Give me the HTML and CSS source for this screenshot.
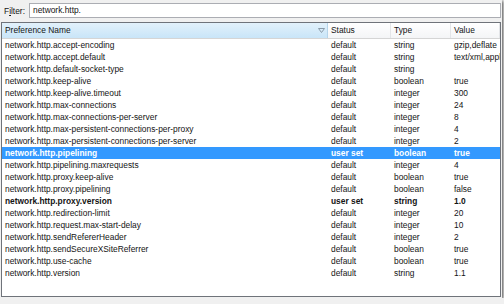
FILE: index.html
```html
<!DOCTYPE html>
<html lang="en">
<head>
  <meta charset="UTF-8" />
  <title>about:config</title>
  <link rel="stylesheet" href="styles.css">
</head>
<body>
  <div class="window">
    <div class="filter-row">
      <label class="filter-label">F<u>i</u>lter:</label>
      <div class="filter-input">network.http.</div>
    </div>

    <div class="prefs">
      <div class="row head">
        <div class="cell sorted">Preference Name
          <svg class="sort-icon" width="7" height="5" viewBox="0 0 7 5"><path d="M0.5 0.5 L6.5 0.5 L3.5 4.5 Z" fill="none" stroke="#8a9aa8" stroke-width="1"/></svg>
        </div>
        <div class="cell">Status</div>
        <div class="cell">Type</div>
        <div class="cell">Value</div>
      </div>

      <div class="row"><div class="cell">network.http.accept-encoding</div><div class="cell">default</div><div class="cell">string</div><div class="cell">gzip,deflate</div></div>
      <div class="row"><div class="cell">network.http.accept.default</div><div class="cell">default</div><div class="cell">string</div><div class="cell">text/xml,application/xml</div></div>
      <div class="row"><div class="cell">network.http.default-socket-type</div><div class="cell">default</div><div class="cell">string</div><div class="cell"></div></div>
      <div class="row"><div class="cell">network.http.keep-alive</div><div class="cell">default</div><div class="cell">boolean</div><div class="cell">true</div></div>
      <div class="row"><div class="cell">network.http.keep-alive.timeout</div><div class="cell">default</div><div class="cell">integer</div><div class="cell">300</div></div>
      <div class="row"><div class="cell">network.http.max-connections</div><div class="cell">default</div><div class="cell">integer</div><div class="cell">24</div></div>
      <div class="row"><div class="cell">network.http.max-connections-per-server</div><div class="cell">default</div><div class="cell">integer</div><div class="cell">8</div></div>
      <div class="row"><div class="cell">network.http.max-persistent-connections-per-proxy</div><div class="cell">default</div><div class="cell">integer</div><div class="cell">4</div></div>
      <div class="row"><div class="cell">network.http.max-persistent-connections-per-server</div><div class="cell">default</div><div class="cell">integer</div><div class="cell">2</div></div>
      <div class="row user selected"><div class="cell">network.http.pipelining</div><div class="cell">user set</div><div class="cell">boolean</div><div class="cell">true</div></div>
      <div class="row"><div class="cell">network.http.pipelining.maxrequests</div><div class="cell">default</div><div class="cell">integer</div><div class="cell">4</div></div>
      <div class="row"><div class="cell">network.http.proxy.keep-alive</div><div class="cell">default</div><div class="cell">boolean</div><div class="cell">true</div></div>
      <div class="row"><div class="cell">network.http.proxy.pipelining</div><div class="cell">default</div><div class="cell">boolean</div><div class="cell">false</div></div>
      <div class="row user"><div class="cell">network.http.proxy.version</div><div class="cell">user set</div><div class="cell">string</div><div class="cell">1.0</div></div>
      <div class="row"><div class="cell">network.http.redirection-limit</div><div class="cell">default</div><div class="cell">integer</div><div class="cell">20</div></div>
      <div class="row"><div class="cell">network.http.request.max-start-delay</div><div class="cell">default</div><div class="cell">integer</div><div class="cell">10</div></div>
      <div class="row"><div class="cell">network.http.sendRefererHeader</div><div class="cell">default</div><div class="cell">integer</div><div class="cell">2</div></div>
      <div class="row"><div class="cell">network.http.sendSecureXSiteReferrer</div><div class="cell">default</div><div class="cell">boolean</div><div class="cell">true</div></div>
      <div class="row"><div class="cell">network.http.use-cache</div><div class="cell">default</div><div class="cell">boolean</div><div class="cell">true</div></div>
      <div class="row"><div class="cell">network.http.version</div><div class="cell">default</div><div class="cell">string</div><div class="cell">1.1</div></div>
    </div>
  </div>
</body>
</html>
```

FILE: styles.css
```css
* {
  margin: 0;
  padding: 0;
  box-sizing: border-box;
}

body {
  background-color: #f0f0f0;
  font-family: 'Liberation Sans', Arial, sans-serif;
  font-size: 8.4px;
  color: #141414;
  overflow: hidden;
}

.window {
  width: 502px;
  height: 298px;
  background-color: #f0f0f0;
  box-shadow: 1px 1px 3px rgba(0, 0, 0, 0.7);
  overflow: hidden;
}

.filter-row {
  display: flex;
  align-items: center;
  padding: 3px 1px 0 4px;
  height: 18px;
}

.filter-label {
  width: 25px;
}

.filter-input {
  flex: 1;
  height: 15px;
  line-height: 13px;
  padding-left: 3px;
  background-color: #fff;
  border: 1px solid #abadb3;
}

.prefs {
  margin: 4px 1px 0 1px;
  height: 275px;
  background-color: #fff;
  border: 1px solid #6f737a;
}

.row {
  display: grid;
  grid-template-columns: 326px 63px 60px 1fr;
  height: 12px;
  line-height: 12px;
  white-space: nowrap;
}

.cell {
  padding-left: 3px;
  overflow: hidden;
}

.row.head {
  height: 16px;
  line-height: 15px;
  border-bottom: 1px solid #d5d5d5;
  background: linear-gradient(#ffffff, #f4f5f7);
}

.row.head .cell {
  border-right: 1px solid #e3e5e8;
}

.row.head .cell.sorted {
  position: relative;
  background: linear-gradient(#e2f1fb, #c9e5f8);
  border-right: 1px solid #b5d4ea;
}

.sort-icon {
  position: absolute;
  right: 2px;
  top: 5px;
}

.row.user {
  font-weight: bold;
}

.row.selected {
  background-color: #3399ff;
  color: #fff;
}
```
